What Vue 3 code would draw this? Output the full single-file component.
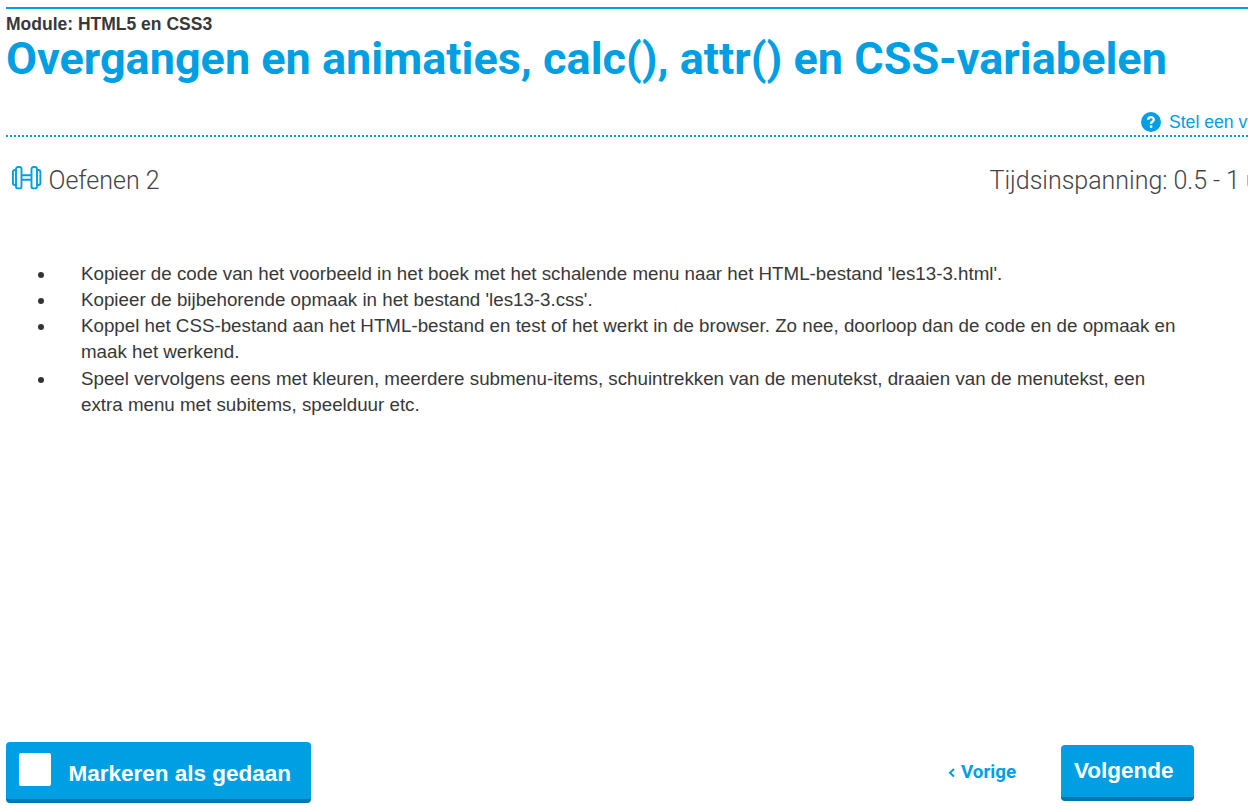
<script setup>
const tasks = [
  ["Kopieer de code van het voorbeeld in het boek met het schalende menu naar het HTML-bestand 'les13-3.html'."],
  ["Kopieer de bijbehorende opmaak in het bestand 'les13-3.css'."],
  ['Koppel het CSS-bestand aan het HTML-bestand en test of het werkt in de browser. Zo nee, doorloop dan de code en de opmaak en', 'maak het werkend.'],
  ['Speel vervolgens eens met kleuren, meerdere submenu-items, schuintrekken van de menutekst, draaien van de menutekst, een', 'extra menu met subitems, speelduur etc.'],
]
</script>

<template>
  <main class="page">
    <header class="head">
      <p class="module">Module: HTML5 en CSS3</p>
      <h1>Overgangen en animaties, calc(), attr() en CSS-variabelen</h1>
      <a class="ask">
        <svg width="20" height="20" viewBox="0 0 20 20"><circle cx="10" cy="10" r="10" fill="#009fe3" /><path d="M7.2 7.8C7.3 4.3 12.8 4.4 12.8 7.6C12.8 9.6 10 9.4 10 12" fill="none" stroke="#fff" stroke-width="2.3" /><path d="M8.8 13.3h2.5v2.5h-2.5z" fill="#fff" /></svg>
        <span>Stel een v</span>
      </a>
    </header>
    <section class="sub">
      <svg class="bell" width="31" height="24" viewBox="0 0 31 24" fill="none" stroke="#009fe3" stroke-width="1.9"><path d="M5 4H3.9Q1.9 4 1.9 6V17Q1.9 19 3.9 19H5M26 4H27.4Q29.4 4 29.4 6V17Q29.4 19 27.4 19H26" /><rect x="5" y="1" width="5.5" height="21.4" rx="2" /><path d="M10.5 9.2h10M10.5 13.8h10" /><rect x="20.5" y="1" width="5.5" height="21.4" rx="2" /></svg>
      <h2>Oefenen 2</h2>
      <span class="time">Tijdsinspanning: 0.5 - 1 u</span>
    </section>
    <ul>
      <li v-for="(t, i) in tasks" :key="i"><span v-for="l in t" :key="l" class="line">{{ l }}</span></li>
    </ul>
    <footer>
      <button class="done"><span class="box"></span><span class="done-text">Markeren als gedaan</span></button>
      <a class="prev"><svg width="8" height="10" viewBox="0 0 8 10"><path d="M7 1.9L3 5.7L7 9.5" fill="none" stroke="#009fe3" stroke-width="2.1" /></svg><span>Vorige</span></a>
      <button class="next"><span>Volgende</span></button>
    </footer>
  </main>
</template>

<style>
body { margin: 0; background: #fff; overflow: hidden; }
</style>
<style scoped>
.page { width: 1248px; height: 808px; box-sizing: border-box; padding: 7px 0 0 6px; overflow: hidden; display: flex; flex-direction: column; font-family: "Liberation Sans", Arial, sans-serif; color: #383838; }
.head { border-top: 2px solid #009fe3; border-bottom: 2px dotted #009fe3; height: 126px; display: flex; flex-direction: column; flex: none; }
p, h1, h2, ul { margin: 0; padding: 0; font-weight: normal; }
.module { font: bold 17.5px/20px "Liberation Sans", Arial, sans-serif; margin-top: 5px; white-space: nowrap; }
h1 { font: bold 45px/50px Roboto, sans-serif; color: #009fe3; white-space: nowrap; }
.ask { display: flex; gap: 8px; align-items: center; margin: 28px 0 0 1135px; color: #009fe3; font-size: 17.6px; line-height: 20px; white-space: nowrap; }
.ask svg { flex: none; }
.sub { display: flex; height: 84px; flex: none; padding: 28px 0 0 5px; box-sizing: border-box; font: 300 25px/30px Roboto, sans-serif; white-space: nowrap; color: #444; }
.bell { flex: none; margin: 1px 6.5px 0 0; }
h2 { font: inherit; width: 941px; flex: none; }
.sub h2, .time { padding-top: 1px; }
.time { word-spacing: -0.25px; }
ul { list-style: none; margin-top: 40px; flex: 1; }
li { position: relative; padding-left: 75px; font-size: 18.76px; line-height: 26px; }
li:last-child { margin-top: 1px; }
li::before { content: ''; position: absolute; left: 32px; top: 11px; width: 6px; height: 6px; border-radius: 50%; background: #333; }
.line { display: block; white-space: nowrap; }
footer { display: flex; height: 66px; align-items: flex-start; flex: none; }
button { border: 0; border-bottom: 4px solid #0077ad; border-radius: 4px; background: #009fe3; color: #fff; padding: 0; box-sizing: border-box; }
.done { width: 305px; height: 61px; display: flex; font: bold 22.5px/26px "Liberation Sans", sans-serif; }
.box { width: 32px; height: 33px; border-radius: 2px; background: #fff; margin: 11px 17.5px 0 13px; }
.done-text { margin-top: 19px; white-space: nowrap; }
.prev { display: flex; align-items: center; gap: 6px; margin: 19px 0 0 636px; width: 114px; font: bold 18.8px/22px Roboto, sans-serif; color: #009fe3; }
.next { width: 133px; height: 56px; margin-top: 3px; padding: 0 0 0 13px; text-align: left; font: bold 22.5px/26px "Liberation Sans", Arial, sans-serif; }
</style>
